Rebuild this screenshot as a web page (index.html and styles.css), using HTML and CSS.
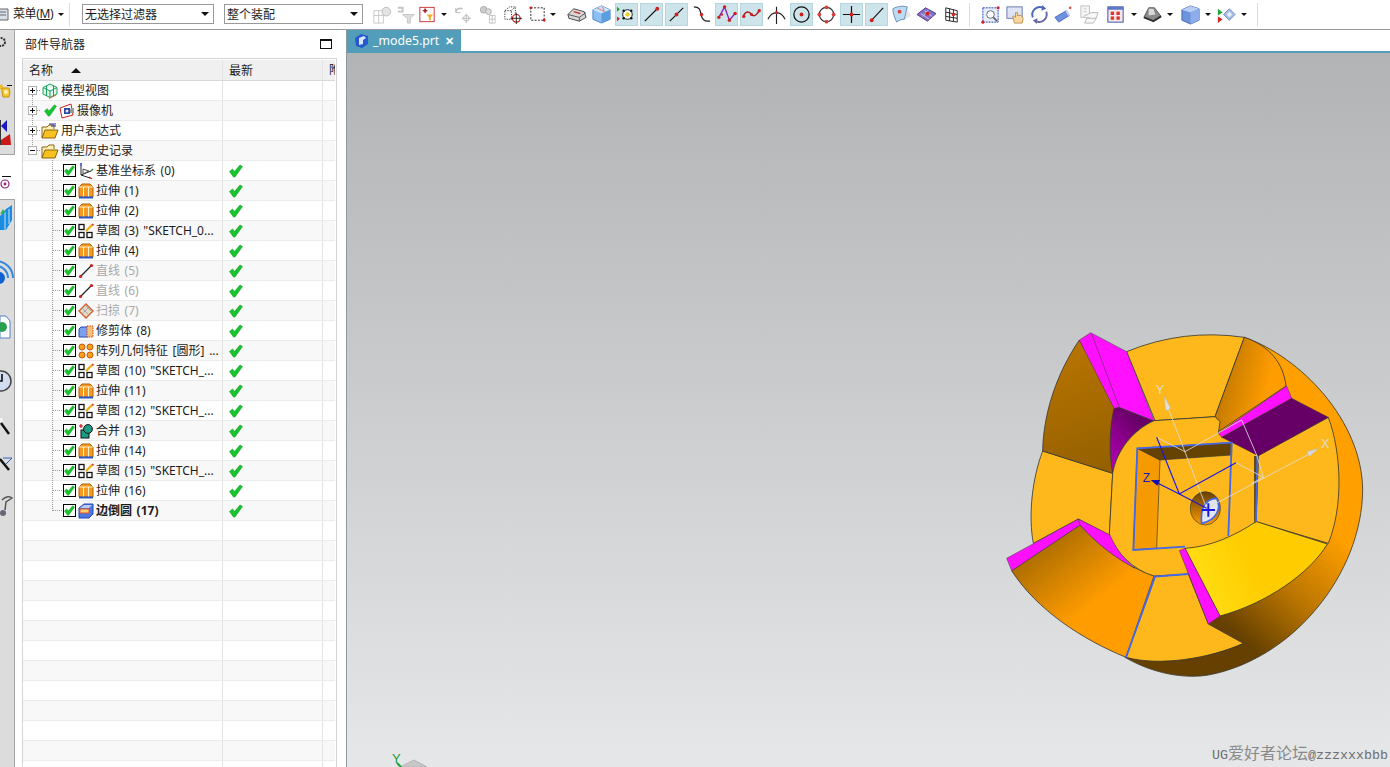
FILE: index.html
```html
<!DOCTYPE html>
<html lang="zh-CN">
<head>
    <meta charset="UTF-8">
    <title>NX - _mode5.prt</title>
    <link rel="stylesheet" href="styles.css">
</head>
<body>
    <svg class="defs">
        <defs>
            <symbol id="chk" viewBox="0 0 14 14"><path d="M0.5 7.5 L3.5 5 L5.5 7.5 L11 1 L13.5 2.5 L6 13 L4.5 13 Z" fill="#12c62c" stroke="#0c8a20" stroke-width="0.5"/></symbol>
            <symbol id="i-ext" viewBox="0 0 16 16"><path d="M1 4 L4 1 H12 L15 4 V14 H1 Z" fill="#f59a20" stroke="#b4600c"/><path d="M5.5 4 V14 M10.5 4 V14 M1 4 H15" stroke="#fff2c8" fill="none"/><path d="M1 14.5 H15" stroke="#2b58c8" stroke-width="2"/></symbol>
            <symbol id="i-sketch" viewBox="0 0 16 16"><g fill="#fff" stroke="#111" stroke-width="1.3"><rect x="1" y="1.5" width="5" height="5"/><rect x="1" y="9.5" width="5" height="5"/><rect x="9" y="9.5" width="5" height="5"/></g><path d="M8 8 L14 2" stroke="#e8b020" stroke-width="2.4"/><path d="M14 1 L15.5 2.5" stroke="#d03030" stroke-width="1.6"/></symbol>
            <symbol id="i-line" viewBox="0 0 16 16"><path d="M2 14 L14 2" stroke="#222" stroke-width="1.2"/><circle cx="2.5" cy="13.5" r="1.6" fill="#d02020"/><circle cx="13.5" cy="2.5" r="1.6" fill="#d02020"/></symbol>
            <symbol id="i-sweep" viewBox="0 0 16 16"><path d="M1 8 L8 1 L15 8 L8 15 Z" fill="#e8d8c8" stroke="#d8602c" stroke-width="1.4"/><path d="M4 5 L11 12 M7 2 L14 9 M11 4 L4 11" stroke="#a8a8a8"/></symbol>
            <symbol id="i-trim" viewBox="0 0 16 16"><path d="M1 6 L3 4 H10 V14 H1 Z" fill="#7ca0ec" stroke="#2448b8"/><rect x="9" y="3" width="6" height="11" fill="#f8c078" stroke="#d04020" stroke-dasharray="1.5 1"/></symbol>
            <symbol id="i-pattern" viewBox="0 0 16 16"><g fill="#f5a020" stroke="#c85a10"><circle cx="4" cy="4" r="3"/><circle cx="12" cy="4" r="3"/><circle cx="4" cy="12" r="3"/><circle cx="12" cy="12" r="3"/></g></symbol>
            <symbol id="i-unite" viewBox="0 0 16 16"><path d="M1 3 H5 M3 1 V5" stroke="#c81818" stroke-width="1.2"/><rect x="3" y="7" width="8" height="8" fill="#1c9c84" stroke="#111"/><circle cx="10" cy="6" r="4.4" fill="#1c9c84" stroke="#111"/></symbol>
            <symbol id="i-blend" viewBox="0 0 16 16"><path d="M1 5 L6 1 H15 V11 L11 15 H1 Z" fill="#4a78e0" stroke="#2448b8"/><path d="M2 6 H11 V10 H2 Z" fill="#f8d070" stroke="#e05030"/><path d="M2 5 L6 2 H14 L11 5 Z" fill="#b8ccf4"/></symbol>
            <symbol id="i-datum" viewBox="0 0 16 16"><path d="M3 3 V12 L13 8 M3 12 L12 15" stroke="#222" fill="none"/><path d="M5 6 L11 8 L5 11 Z" fill="#eee" stroke="#555"/><path d="M3 0 V3" stroke="#1c30c8" stroke-width="1.4"/><path d="M13 8 L15 6" stroke="#1c9c30" stroke-width="1.4"/><path d="M11 14 L14 16" stroke="#c81818" stroke-width="1.4"/></symbol>
            <symbol id="i-folder" viewBox="0 0 18 16"><path d="M1 15 V4 H6 L8 2 H13 V6" fill="#fff0b8" stroke="#8a6410"/><path d="M1 15 L4 7 H17 L14 15 Z" fill="#f8c020" stroke="#8a6410"/></symbol>
        </defs>
    </svg>

    <div class="toolbar">
        <div class="menu-btn">
            <svg class="menu-icon" width="9" height="16" viewBox="0 0 9 16"><path d="M-4 3 H8 V14 H-4 Z" fill="#d8e0e8" stroke="#666"/><path d="M0 6 H6 M0 9 H6" stroke="#667"/></svg>
            <span class="menu-label">菜单(<u>M</u>)</span>
            <span class="tb-arrow-glyph"></span>
        </div>
        <div class="tb-sep first"></div>
        <div class="combo combo-filter"><span>无选择过滤器</span><i></i></div>
        <div class="combo combo-scope"><span>整个装配</span><i></i></div>

        <div class="tb-group">
            <div class="tb-btn"><svg viewBox="0 0 22 22"><path d="M3 7 H13 V20 H3 Z M3 12 H13 M8 7 V20" fill="none" stroke="#c8c8c8"/><circle cx="16" cy="8" r="4.5" fill="#e4e4e4" stroke="#bbb"/></svg></div>
            <div class="tb-btn w22"><svg viewBox="0 0 22 22"><path d="M3 8 H8 V4 L3 4" fill="none" stroke="#c4c4c4" stroke-width="2"/><path d="M8 11 H20 L16 15 V20 H13 V15 Z" fill="#dedede" stroke="#c4c4c4"/></svg></div>
            <div class="tb-btn w22"><svg viewBox="0 0 22 22"><rect x="3" y="3" width="15" height="15" fill="#fff" stroke="#c8323c" transform="translate(0 .5)"/><path d="M6 7 H11 M8.5 4.5 V9.5" stroke="#a01820"/><circle cx="8.5" cy="7" r="1.3" fill="none" stroke="#a01820"/><path d="M10 11 H17 L14.5 14 V17 H12.5 V14 Z" fill="#f0b020"/></svg></div>
            <div class="tb-arrow"><span class="tb-arrow-glyph"></span></div>
            <div class="tb-btn"><svg viewBox="0 0 22 22"><path d="M4 8 A5 5 0 0 1 11 5" fill="none" stroke="#bbb" stroke-width="1.5"/><path d="M4 4 V9 H9" fill="none" stroke="#bbb"/><path d="M10 15 H20 M15 10 V20" stroke="#bbb"/><circle cx="15" cy="15" r="3" fill="none" stroke="#bbb"/></svg></div>
            <div class="tb-btn"><svg viewBox="0 0 22 22"><circle cx="7" cy="6" r="3.5" fill="#ccc" stroke="#aaa"/><circle cx="12" cy="8" r="3" fill="#ddd" stroke="#aaa"/><path d="M13 12 H19 V20 H13 Z M13 16 H19 M16 12 V20" fill="none" stroke="#c4c4c4"/></svg></div>
            <div class="tb-btn"><svg viewBox="0 0 22 22"><path d="M3 7 L8 3 H14 V13 L10 16 H3 Z M3 7 H10 V16 M10 7 L14 3" fill="none" stroke="#333" stroke-dasharray="1.3 1.3"/><circle cx="15" cy="15" r="4" fill="#fff" stroke="#c81818" stroke-width="1.3"/><path d="M9 15 H21 M15 9 V21" stroke="#222"/></svg></div>
            <div class="tb-btn"><svg viewBox="0 0 22 22"><rect x="4" y="4" width="14" height="13" fill="none" stroke="#222" stroke-dasharray="2 1.5"/><circle cx="4" cy="4" r="1.5" fill="#d02020"/><circle cx="18" cy="17" r="1.5" fill="#d02020"/></svg></div>
            <div class="tb-arrow wide"><span class="tb-arrow-glyph"></span></div>
            <div class="tb-btn"><svg viewBox="0 0 22 22"><path d="M2 11 L8 5 L19 8 L21 14 L14 18 L3 15 Z" fill="#d8d8d8" stroke="#444"/><path d="M2 11 L14 14 L21 9 M14 14 V18" fill="none" stroke="#555"/><path d="M8 8 L15 10" stroke="#c83838" stroke-width="1.5"/></svg></div>
            <div class="tb-btn"><svg viewBox="0 0 22 22"><path d="M2 6 L11 2 L20 6 V16 L11 20 L2 16 Z" fill="#8cc0f0" stroke="#4a84c8"/><path d="M2 6 L11 10 L20 6 L11 2 Z" fill="#c8e4fa"/><path d="M11 10 V20 L20 16 V6 Z" fill="#5c9ce0"/><path d="M6 4 L14 8 L12 3" fill="none" stroke="#e87080"/></svg></div>

            <div class="tb-btn hl"><svg viewBox="0 0 22 22"><path d="M1 8 L4 5.5 L1 3 Z" fill="#18a828"/><path d="M1 18 L4 15.5 L1 13 Z" fill="#d02020"/><circle cx="12" cy="11" r="5" fill="#fff" stroke="#111"/><path d="M12 8 L15 11 L12 14 L9 11 Z" fill="#f0d020"/><g fill="#111"><circle cx="8" cy="7" r="1.3"/><circle cx="16" cy="7" r="1.3"/><circle cx="8" cy="15" r="1.3"/><circle cx="16" cy="15" r="1.3"/></g></svg></div>
            <div class="tb-btn hl"><svg viewBox="0 0 22 22"><path d="M4 18 L17 5" stroke="#111" stroke-width="1.2"/><circle cx="17" cy="5" r="2" fill="#d02020"/></svg></div>
            <div class="tb-btn hl"><svg viewBox="0 0 22 22"><path d="M4 18 L18 4" stroke="#111" stroke-width="1.2"/><circle cx="11" cy="11" r="2" fill="#d02020"/></svg></div>
            <div class="tb-btn"><svg viewBox="0 0 22 22"><path d="M3 3 C12 3 9 11 12 15 C14 18 16 18 20 18" fill="none" stroke="#222" stroke-width="1.3"/><circle cx="11" cy="11" r="1.8" fill="#d02020"/></svg></div>
            <div class="tb-btn hl"><svg viewBox="0 0 22 22"><path d="M3 14 L9 3 L14 17 L20 10" fill="none" stroke="#8a20c0" stroke-width="1.4"/><g fill="#d02020"><circle cx="3" cy="14" r="1.8"/><circle cx="9" cy="3" r="1.8"/><circle cx="14" cy="17" r="1.8"/><circle cx="20" cy="10" r="1.8"/><circle cx="6" cy="11" r="1.4"/></g></svg></div>
            <div class="tb-btn hl"><svg viewBox="0 0 22 22"><path d="M2 14 C5 6 9 8 11 11 C14 14 17 11 20 6" fill="none" stroke="#a81818" stroke-width="1.5"/><g fill="#d02020"><circle cx="3" cy="13" r="1.7"/><circle cx="11" cy="11" r="1.7"/><circle cx="19" cy="7" r="1.7"/></g></svg></div>
            <div class="tb-btn"><svg viewBox="0 0 22 22"><path d="M11 3 V21 M2 16 C5 10 8 9 11 9 C14 9 17 10 20 16" fill="none" stroke="#222" stroke-width="1.2"/><circle cx="11" cy="9" r="1.6" fill="#d02020"/></svg></div>
            <div class="tb-btn hl"><svg viewBox="0 0 22 22"><circle cx="11" cy="11" r="8" fill="none" stroke="#111" stroke-width="1.3"/><circle cx="11" cy="11" r="2" fill="#d02020"/></svg></div>
            <div class="tb-btn"><svg viewBox="0 0 22 22"><circle cx="11" cy="11" r="7.5" fill="none" stroke="#222" stroke-width="1.2"/><g fill="#d84040"><circle cx="11" cy="3.5" r="2"/><circle cx="11" cy="18.5" r="2"/><circle cx="3.5" cy="11" r="2"/><circle cx="18.5" cy="11" r="2"/></g></svg></div>
            <div class="tb-btn hl"><svg viewBox="0 0 22 22"><path d="M11 2 V20 M2 11 H20" stroke="#111" stroke-width="1.3"/><circle cx="11" cy="11" r="2" fill="#d02020"/></svg></div>
            <div class="tb-btn hl"><svg viewBox="0 0 22 22"><path d="M5 18 L18 4" stroke="#111" stroke-width="1.2"/><circle cx="6" cy="17" r="2" fill="#d02020"/></svg></div>
            <div class="tb-btn"><svg viewBox="0 0 22 22"><path d="M17 6 L21 12 L14 17 Z" fill="#e8e8e8"/><path d="M2 5 C7 2 13 2 17 3 L14 16 C11 16 8 17 6 19 C4 15 2 10 2 5 Z" fill="#bcdcf4" stroke="#6a8cb8"/><circle cx="9" cy="8" r="2" fill="#d84040"/></svg></div>
            <div class="tb-btn"><svg viewBox="0 0 22 22"><path d="M1 11 L10 4 L21 10 L12 18 Z" fill="#8a70c0" stroke="#4a3a88"/><path d="M5 10 L14 16 M9 7 L17 13 M13 6 L7 13" stroke="#c8c0e8"/><circle cx="12" cy="10" r="2" fill="#d02020"/></svg></div>
            <div class="tb-btn"><svg viewBox="0 0 22 22"><path d="M5 4 L17 7 V19 L5 17 Z M9 5 V18 M13 6 V18.5 M5 8.5 L17 11 M5 13 L17 15" fill="#fff" stroke="#222"/><circle cx="13" cy="11" r="1.8" fill="#d02020"/></svg></div>
        </div>

        <div class="tb-sep mid"></div>

        <div class="tb-group">
            <div class="tb-btn"><svg viewBox="0 0 22 22"><rect x="3" y="4" width="16" height="15" fill="#e8eef8" stroke="#2040b8" stroke-dasharray="2 1"/><circle cx="11" cy="11" r="4" fill="#fff" stroke="#667"/><path d="M14 14 L18 18" stroke="#556" stroke-width="1.6"/><circle cx="19" cy="4" r="1.6" fill="#d02020"/><circle cx="3" cy="19" r="1.6" fill="#d02020"/></svg></div>
            <div class="tb-btn"><svg viewBox="0 0 22 22"><rect x="2" y="3" width="16" height="12" fill="#dde4f4" stroke="#6a78a8"/><path d="M10 20 L8 13 C9 12 10 13 11 14 L11 9 H13 V12 H17 L19 15 L18 20 Z" fill="#f8d8a0" stroke="#c09050"/></svg></div>
            <div class="tb-btn w23"><svg viewBox="0 0 22 22"><path d="M4 14 A8 8 0 0 1 15 4" fill="none" stroke="#4a68b8" stroke-width="2"/><path d="M18 8 A8 8 0 0 1 7 18" fill="none" stroke="#6a6aa8" stroke-width="2"/><path d="M14 1 L18 5 L13 7 Z" fill="#4a68b8"/><path d="M8 21 L4 17 L9 15 Z" fill="#6a6aa8"/></svg></div>
            <div class="tb-btn"><svg viewBox="0 0 22 22"><path d="M2 14 L14 7 L17 12 L6 19 Z" fill="#7090e0" stroke="#5070c8"/><path d="M14 7 L17 12" stroke="#c8d4f8" stroke-width="2"/><circle cx="18" cy="4" r="1.4" fill="#e05050"/></svg></div>
            <div class="tb-btn"><svg viewBox="0 0 22 22"><rect x="3" y="2" width="9" height="12" fill="#f4f4f4" stroke="#c0c0c0"/><path d="M6 5 H9 M6 8 H9" stroke="#ccc"/><path d="M6 13 L14 9 H21 L19 15 H9 L7 20 H16 L19 15" fill="#f8f8f8" stroke="#b8b8b8"/></svg></div>
            <div class="tb-btn m2"><svg viewBox="0 0 22 22"><rect x="3" y="3" width="16" height="16" fill="#f4e8e8" stroke="#3850a8"/><rect x="3" y="3" width="16" height="3" fill="#5c78c8"/><g fill="#e03030"><rect x="6" y="8" width="3.5" height="3.5"/><rect x="12" y="8" width="3.5" height="3.5"/><rect x="6" y="13" width="3.5" height="3.5"/><rect x="12" y="13" width="3.5" height="3.5"/></g></svg></div>
            <div class="tb-arrow"><span class="tb-arrow-glyph"></span></div>
            <div class="tb-btn"><svg viewBox="0 0 22 22"><path d="M2 14 L7 4 L13 4 L20 13 L12 18 Z" fill="#8a8a8a" stroke="#555"/><path d="M7 5 L12 5 L14 11 L7 12 Z" fill="#d8d8d8"/><path d="M2 14 L12 18 L20 13" fill="none" stroke="#333" stroke-width="2"/></svg></div>
            <div class="tb-arrow narrow"><span class="tb-arrow-glyph"></span></div>
            <div class="tb-btn m3"><svg viewBox="0 0 22 22"><path d="M2 6 L11 2 L20 5 V17 L11 21 L2 17 Z" fill="#6c94dc" stroke="#4868b0"/><path d="M2 6 L11 9 L20 5 L11 2 Z" fill="#b8cef4"/><path d="M11 9 V21 L20 17 V5 Z" fill="#8cacea"/></svg></div>
            <div class="tb-arrow narrow"><span class="tb-arrow-glyph"></span></div>
            <div class="tb-btn"><svg viewBox="0 0 22 22"><path d="M9 11 L15 5 L21 11 L15 17 Z" fill="#a8c0e8" stroke="#6a88c0"/><path d="M13 10 L15 8 L18 11 L15 14 L13 12 Z" fill="#e8eef8"/><path d="M3 5 L8 9 L3 12 Z" fill="#20a838"/><path d="M3 13 L8 16 L3 20 Z" fill="#d82020"/></svg></div>
            <div class="tb-arrow"><span class="tb-arrow-glyph"></span></div>
        </div>

        <div class="tb-sep end"></div>
    </div>

    <div class="main">
        <div class="side-strip">
            <div class="strip-top">
                <svg width="15" height="124" viewBox="0 0 15 124"><circle cx="1" cy="12" r="4" fill="none" stroke="#333" stroke-width="2" stroke-dasharray="2 1"/><rect x="7" y="55" width="5" height="1" fill="#111"/><path d="M-3 57 L2 54 L3 57 L0 60 Z" fill="#f0c020"/><path d="M2 58 L9 58 L10 62 L9 67 L3 67 L2 62 Z" fill="#f0c838" stroke="#c89010"/><circle cx="6" cy="62" r="2" fill="#fff4b0"/><path d="M7 90 V102 L1 96 Z" fill="#1818c8"/><path d="M1 110 L10 104 L11 115 H1 Z" fill="#c81818"/><path d="M-1 90 L0 95 L-1 115 H1 V90 Z" fill="#333"/></svg>
            </div>
            <div class="strip-gap">
                <svg width="15" height="44" viewBox="0 0 15 44"><rect x="2" y="21" width="9" height="1" fill="#111"/><circle cx="5" cy="29" r="4" fill="none" stroke="#902080" stroke-width="1.2"/><circle cx="5" cy="29" r="1.4" fill="#902080"/></svg>
            </div>
            <div class="strip-bottom">
                <svg width="15" height="340" viewBox="0 0 15 340"><path d="M0 16 L6 9 L12 5 V20 L6 30 H0 Z" fill="#1c8ce0"/><path d="M5 12 V30 M9 9 V24" stroke="#bfe4fa"/><path d="M0 14 L3 9 L5 13" fill="#30b040"/><path d="M-4 61 A17 17 0 0 1 13 78" fill="none" stroke="#3088e0" stroke-width="2"/><path d="M-4 66 A12 12 0 0 1 8 78" fill="none" stroke="#3088e0" stroke-width="2"/><circle cx="-1" cy="78" r="6" fill="#1060d0"/><path d="M0 116 H6 L10 121 V138 H0 Z" fill="#fff" stroke="#5080c8"/><circle cx="2" cy="127" r="5" fill="#28a050"/><circle cx="1" cy="181" r="10" fill="#d0dcf0" stroke="#444" stroke-width="1.5"/><path d="M-3 181 H2 V174" fill="none" stroke="#111" stroke-width="1.6"/><path d="M1 223 L9 234" stroke="#111" stroke-width="2.4"/><circle cx="1" cy="220" r="2" fill="#f4f4f4"/><path d="M0 259 L9 270" stroke="#111" stroke-width="2.4"/><path d="M3 258 H12 L6 264" fill="none" stroke="#3060c0"/><path d="M2 300 C6 296 10 296 12 298 L6 302 L5 310" fill="none" stroke="#555" stroke-width="1.5"/><circle cx="3" cy="313" r="3" fill="#667"/></svg>
            </div>
        </div>

        <div class="nav-panel">
            <div class="nav-title">
                <span>部件导航器</span>
                <div class="maximize"></div>
            </div>
            <div class="tree">
                <div class="tree-head">
                    <div class="col-name head-cell"><span class="head-name">名称</span><i class="sort-up"></i></div>
                    <div class="col-new head-cell">最新</div>
                    <div class="col-rest head-cell">附</div>
                </div>
                <div class="tree-body">
                    <div class="row">
                        <div class="col-name"><span class="exp plus"></span><span class="dots"></span>
                            <svg class="icon-top" viewBox="0 0 18 16"><path d="M9 1 L16 4.5 V11 L9 14.5 L2 11 V4.5 Z M2 4.500 L9 8 L16 4.5 M9 8 V14.5 M5.5 2.7 V13 M12.5 2.7 V13" fill="#dff5e8" stroke="#18a060"/><path d="M8 15.5 L15 12" stroke="#e06030"/></svg>
                            <span class="label">模型视图</span></div>
                        <div class="col-new"></div><div class="col-rest"></div>
                    </div>
                    <div class="row">
                        <div class="col-name"><span class="exp plus"></span><span class="dots"></span>
                            <svg class="chk-top"><use href="#chk"/></svg>
                            <svg class="icon-cam" viewBox="0 0 16 16"><path d="M1 5 L12 1 L14 12 L3 15 Z" fill="#fff" stroke="#d02020"/><rect x="5" y="5" width="6" height="6" fill="#2848a8"/><circle cx="8" cy="8" r="1.5" fill="#e8e8e8"/><path d="M11 6 L15 5 V10 L11 10" fill="#999"/></svg>
                            <span class="label">摄像机</span></div>
                        <div class="col-new"></div><div class="col-rest"></div>
                    </div>
                    <div class="row">
                        <div class="col-name"><span class="exp plus"></span><span class="dots"></span>
                            <svg class="icon-top" viewBox="0 0 18 16"><use href="#i-folder"/><path d="M8 1 H15 M10 3 H15" stroke="#2828a8"/></svg>
                            <span class="label">用户表达式</span></div>
                        <div class="col-new"></div><div class="col-rest"></div>
                    </div>
                    <div class="row">
                        <div class="col-name"><span class="exp minus"></span><span class="dots"></span>
                            <svg class="icon-top"><use href="#i-folder"/></svg>
                            <span class="label">模型历史记录</span></div>
                        <div class="col-new"></div><div class="col-rest"></div>
                    </div>

                    <div class="row feat">
                        <div class="col-name"><span class="twig"></span><span class="cbox"><svg><use href="#chk"/></svg></span><svg class="feat-icon"><use href="#i-datum"/></svg><span class="label">基准坐标系 (0)</span></div>
                        <div class="col-new"><svg class="ok"><use href="#chk"/></svg></div><div class="col-rest"></div>
                    </div>
                    <div class="row feat">
                        <div class="col-name"><span class="twig"></span><span class="cbox"><svg><use href="#chk"/></svg></span><svg class="feat-icon"><use href="#i-ext"/></svg><span class="label">拉伸 (1)</span></div>
                        <div class="col-new"><svg class="ok"><use href="#chk"/></svg></div><div class="col-rest"></div>
                    </div>
                    <div class="row feat">
                        <div class="col-name"><span class="twig"></span><span class="cbox"><svg><use href="#chk"/></svg></span><svg class="feat-icon"><use href="#i-ext"/></svg><span class="label">拉伸 (2)</span></div>
                        <div class="col-new"><svg class="ok"><use href="#chk"/></svg></div><div class="col-rest"></div>
                    </div>
                    <div class="row feat">
                        <div class="col-name"><span class="twig"></span><span class="cbox"><svg><use href="#chk"/></svg></span><svg class="feat-icon"><use href="#i-sketch"/></svg><span class="label">草图 (3) "SKETCH_0...</span></div>
                        <div class="col-new"><svg class="ok"><use href="#chk"/></svg></div><div class="col-rest"></div>
                    </div>
                    <div class="row feat">
                        <div class="col-name"><span class="twig"></span><span class="cbox"><svg><use href="#chk"/></svg></span><svg class="feat-icon"><use href="#i-ext"/></svg><span class="label">拉伸 (4)</span></div>
                        <div class="col-new"><svg class="ok"><use href="#chk"/></svg></div><div class="col-rest"></div>
                    </div>
                    <div class="row feat">
                        <div class="col-name"><span class="twig"></span><span class="cbox"><svg><use href="#chk"/></svg></span><svg class="feat-icon"><use href="#i-line"/></svg><span class="label dim">直线 (5)</span></div>
                        <div class="col-new"><svg class="ok"><use href="#chk"/></svg></div><div class="col-rest"></div>
                    </div>
                    <div class="row feat">
                        <div class="col-name"><span class="twig"></span><span class="cbox"><svg><use href="#chk"/></svg></span><svg class="feat-icon"><use href="#i-line"/></svg><span class="label dim">直线 (6)</span></div>
                        <div class="col-new"><svg class="ok"><use href="#chk"/></svg></div><div class="col-rest"></div>
                    </div>
                    <div class="row feat">
                        <div class="col-name"><span class="twig"></span><span class="cbox"><svg><use href="#chk"/></svg></span><svg class="feat-icon"><use href="#i-sweep"/></svg><span class="label dim">扫掠 (7)</span></div>
                        <div class="col-new"><svg class="ok"><use href="#chk"/></svg></div><div class="col-rest"></div>
                    </div>
                    <div class="row feat">
                        <div class="col-name"><span class="twig"></span><span class="cbox"><svg><use href="#chk"/></svg></span><svg class="feat-icon"><use href="#i-trim"/></svg><span class="label">修剪体 (8)</span></div>
                        <div class="col-new"><svg class="ok"><use href="#chk"/></svg></div><div class="col-rest"></div>
                    </div>
                    <div class="row feat">
                        <div class="col-name"><span class="twig"></span><span class="cbox"><svg><use href="#chk"/></svg></span><svg class="feat-icon"><use href="#i-pattern"/></svg><span class="label">阵列几何特征 [圆形] ...</span></div>
                        <div class="col-new"><svg class="ok"><use href="#chk"/></svg></div><div class="col-rest"></div>
                    </div>
                    <div class="row feat">
                        <div class="col-name"><span class="twig"></span><span class="cbox"><svg><use href="#chk"/></svg></span><svg class="feat-icon"><use href="#i-sketch"/></svg><span class="label">草图 (10) "SKETCH_...</span></div>
                        <div class="col-new"><svg class="ok"><use href="#chk"/></svg></div><div class="col-rest"></div>
                    </div>
                    <div class="row feat">
                        <div class="col-name"><span class="twig"></span><span class="cbox"><svg><use href="#chk"/></svg></span><svg class="feat-icon"><use href="#i-ext"/></svg><span class="label">拉伸 (11)</span></div>
                        <div class="col-new"><svg class="ok"><use href="#chk"/></svg></div><div class="col-rest"></div>
                    </div>
                    <div class="row feat">
                        <div class="col-name"><span class="twig"></span><span class="cbox"><svg><use href="#chk"/></svg></span><svg class="feat-icon"><use href="#i-sketch"/></svg><span class="label">草图 (12) "SKETCH_...</span></div>
                        <div class="col-new"><svg class="ok"><use href="#chk"/></svg></div><div class="col-rest"></div>
                    </div>
                    <div class="row feat">
                        <div class="col-name"><span class="twig"></span><span class="cbox"><svg><use href="#chk"/></svg></span><svg class="feat-icon"><use href="#i-unite"/></svg><span class="label">合并 (13)</span></div>
                        <div class="col-new"><svg class="ok"><use href="#chk"/></svg></div><div class="col-rest"></div>
                    </div>
                    <div class="row feat">
                        <div class="col-name"><span class="twig"></span><span class="cbox"><svg><use href="#chk"/></svg></span><svg class="feat-icon"><use href="#i-ext"/></svg><span class="label">拉伸 (14)</span></div>
                        <div class="col-new"><svg class="ok"><use href="#chk"/></svg></div><div class="col-rest"></div>
                    </div>
                    <div class="row feat">
                        <div class="col-name"><span class="twig"></span><span class="cbox"><svg><use href="#chk"/></svg></span><svg class="feat-icon"><use href="#i-sketch"/></svg><span class="label">草图 (15) "SKETCH_...</span></div>
                        <div class="col-new"><svg class="ok"><use href="#chk"/></svg></div><div class="col-rest"></div>
                    </div>
                    <div class="row feat">
                        <div class="col-name"><span class="twig"></span><span class="cbox"><svg><use href="#chk"/></svg></span><svg class="feat-icon"><use href="#i-ext"/></svg><span class="label">拉伸 (16)</span></div>
                        <div class="col-new"><svg class="ok"><use href="#chk"/></svg></div><div class="col-rest"></div>
                    </div>
                    <div class="row feat last">
                        <div class="col-name"><span class="twig"></span><span class="cbox"><svg><use href="#chk"/></svg></span><svg class="feat-icon"><use href="#i-blend"/></svg><span class="label strong">边倒圆 (17)</span></div>
                        <div class="col-new"><svg class="ok"><use href="#chk"/></svg></div><div class="col-rest"></div>
                    </div>

                    <div class="row"><div class="col-name"></div><div class="col-new"></div><div class="col-rest"></div></div>
                    <div class="row"><div class="col-name"></div><div class="col-new"></div><div class="col-rest"></div></div>
                    <div class="row"><div class="col-name"></div><div class="col-new"></div><div class="col-rest"></div></div>
                    <div class="row"><div class="col-name"></div><div class="col-new"></div><div class="col-rest"></div></div>
                    <div class="row"><div class="col-name"></div><div class="col-new"></div><div class="col-rest"></div></div>
                    <div class="row"><div class="col-name"></div><div class="col-new"></div><div class="col-rest"></div></div>
                    <div class="row"><div class="col-name"></div><div class="col-new"></div><div class="col-rest"></div></div>
                    <div class="row"><div class="col-name"></div><div class="col-new"></div><div class="col-rest"></div></div>
                    <div class="row"><div class="col-name"></div><div class="col-new"></div><div class="col-rest"></div></div>
                    <div class="row"><div class="col-name"></div><div class="col-new"></div><div class="col-rest"></div></div>
                    <div class="row"><div class="col-name"></div><div class="col-new"></div><div class="col-rest"></div></div>
                    <div class="row"><div class="col-name"></div><div class="col-new"></div><div class="col-rest"></div></div>
                    <div class="row"><div class="col-name"></div><div class="col-new"></div><div class="col-rest"></div></div>
                </div>
            </div>
        </div>

        <div class="work-area">
            <div class="tab-bar">
                <div class="tab">
                    <svg width="16" height="16" viewBox="0 0 16 16"><path d="M1 5 L7 1 L14 3 V11 L8 15 L2 13 Z" fill="#2858d0"/><path d="M5 5 L10 3 L12 5 L9 7 V11 L5 12 Z" fill="#d8e8fc"/></svg>
                    <span class="tab-name">_mode5.prt</span>
                    <span class="tab-close">✕</span>
                </div>
            </div>
            <div class="viewport">
                <svg class="model" viewBox="0 0 1110 1080">
                    <defs>
                        <linearGradient id="rim" x1="0.9" y1="0.2" x2="0.4" y2="1"><stop offset="0.35" stop-color="#ff9f00"/><stop offset="0.62" stop-color="#b87400"/><stop offset="0.85" stop-color="#654000"/></linearGradient>
                        <linearGradient id="recess" x1="0" y1="0.3" x2="1" y2="0.6"><stop offset="0.1" stop-color="#c07800"/><stop offset="0.75" stop-color="#ff9c00"/></linearGradient>
                        <linearGradient id="lowleft" x1="0.15" y1="0.05" x2="0.75" y2="0.75"><stop offset="0" stop-color="#9c6400"/><stop offset="0.75" stop-color="#ff9c00"/></linearGradient>
                        <linearGradient id="upleft" x1="0.5" y1="0" x2="0.7" y2="1"><stop offset="0" stop-color="#b87400"/><stop offset="1" stop-color="#946000"/></linearGradient>
                        <linearGradient id="fillet" x1="0.8" y1="0" x2="0.1" y2="1"><stop offset="0.2" stop-color="#660066"/><stop offset="1" stop-color="#b800b8"/></linearGradient>
                        <linearGradient id="bright" x1="0" y1="0.6" x2="0.7" y2="0.4"><stop offset="0" stop-color="#ffe014"/><stop offset="0.7" stop-color="#ffcc00"/></linearGradient>
                        <linearGradient id="hole" x1="0" y1="0" x2="0" y2="1"><stop offset="0" stop-color="#654000"/><stop offset="1" stop-color="#ff9c00"/></linearGradient>
                    </defs>
                    <g stroke="#3a3a30" stroke-width="2.5" stroke-linejoin="round">
                        <path d="M733 52 C900 110 1086 300 1088 510 C1086 760 880 1020 620 1066 C530 1078 440 1050 375 1012 Z" fill="url(#rim)"/>
                        <path d="M380 95 Q550 25 733 52 L645 290 L465 302 Z" fill="#ffb81c"/>
                        <path d="M733 52 C810 78 850 130 858 198 L655 335 L658 305 L645 290 Z" fill="url(#recess)"/>
                        <path d="M985 292 C1025 400 1030 560 985 670 L768 605 L775 407 Z" fill="#ffb81c"/>
                        <path d="M555 685 L770 605 L982 672 C930 760 800 850 660 888 Z" fill="url(#bright)"/>
                        <path d="M465 770 L565 762 L625 912 L730 970 C630 1015 480 1040 378 1012 Z" fill="#ffb81c"/>
                        <path d="M35 752 L240 615 C300 680 370 735 462 768 L378 1012 C250 960 110 870 35 752 Z" fill="url(#lowleft)"/>
                        <path d="M128 393 L338 460 L328 645 L235 597 L100 670 C85 590 95 480 128 393 Z" fill="#ffb81c"/>
                        <path d="M238 60 C170 160 130 280 128 393 L338 460 L358 262 Z" fill="url(#upleft)"/>
                        <path d="M462 302 C400 330 350 390 338 460 C325 390 330 320 342 265 L358 262 Z" fill="url(#fillet)"/>
                        <path d="M462 302 L645 290 L660 305 L655 340 L775 407 L768 605 C700 650 630 680 555 685 L565 762 L462 768 C400 750 350 700 328 645 L338 460 C350 390 400 330 462 302 Z" fill="#ffb81c"/>
                    </g>
                    <g stroke="#3a3a30" stroke-width="1.5">
                        <path d="M238 60 L272 38 L380 95 L462 302 L358 262 L342 265 Z" fill="#ff10ff"/>
                        <path d="M275 42 L358 262" fill="none"/>
                        <path d="M655 340 L860 198 L875 235 L665 352 Z" fill="#ff10ff"/>
                        <path d="M665 352 L875 235 L985 292 L775 407 Z" fill="#660066"/>
                        <path d="M538 692 L555 685 L660 888 L625 912 Z" fill="#ff10ff"/>
                        <path d="M20 715 L235 597 L240 615 L35 752 Z" fill="#ff10ff"/>
                        <path d="M235 597 L330 645 C350 690 370 715 405 745 C340 710 290 670 240 615 Z" fill="#ff10ff"/>
                    </g>
                    <path d="M412 385 L480 420 L470 685 L400 690 Z" fill="#f59a00" stroke="#3a3a30" stroke-width="2"/>
                    <path d="M412 385 L695 368 L695 405 L480 420 Z" fill="#664200" stroke="#3a3a30" stroke-width="2"/>
                    <path d="M762 408 H775 L768 605 H762 Z" fill="#6a4800"/>
                    <g fill="none" stroke="#4468e8" stroke-width="5.5">
                        <path d="M685 648 L695 368 L412 385 L400 690 L555 680"/>
                        <path d="M378 1012 L465 770 L565 762"/>
                        <path d="M772 407 L768 605"/>
                    </g>
                    <ellipse cx="616" cy="565" rx="45" ry="50" fill="url(#hole)" stroke="#3a3a30" stroke-width="2"/>
                    <path d="M605 610 C600 570 615 535 650 535 C665 565 650 600 605 610 Z" fill="#e2e6f0" stroke="#4468e8" stroke-width="5"/>
                    <g fill="none" stroke="#dcdcd8" stroke-width="2.5">
                        <path d="M620 565 L495 240 M620 565 L950 390"/>
                        <path d="M470 352 L555 395 L725 300 L770 405 L790 472 L708 428"/>
                        <path d="M790 472 L755 490"/>
                    </g>
                    <g fill="none" stroke="#1818e0" stroke-width="3.5">
                        <path d="M470 352 L538 522 L708 428 M538 522 L620 565 M538 522 L465 485"/>
                        <path d="M625 550 V590 M605 570 H645" stroke-width="6"/>
                    </g>
                    <path d="M493 228 L512 265 L497 272 Z" fill="#e0e0e0" stroke="#a8a8a8"/>
                    <path d="M955 385 L920 395 L928 410 Z" fill="#d8d8d8" stroke="#a8a8a8"/>
                    <path d="M452 480 L480 480 L472 497 Z" fill="#1010b0"/>
                    <text class="axis axis-light" x="468" y="222">Y</text>
                    <text class="axis axis-light" x="964" y="384">X</text>
                    <text class="axis axis-blue" x="428" y="486">Z</text>
                </svg>
                <svg class="triad" viewBox="0 0 50 20">
                    <path d="M11 20 L25 13 L38 20 Z" fill="#c8c8c8" stroke="#b4b4b4"/>
                    <path d="M8 16 L12 20" stroke="#18a038" stroke-width="2"/>
                    <text x="3" y="16" class="triad-y">Y</text>
                </svg>
                <div class="watermark">UG<span class="wm-cjk">爱好者论坛</span>@zzzxxxbbb</div>
            </div>
        </div>
    </div>
</body>
</html>
```

FILE: styles.css
```css
html, body {
    margin: 0;
    padding: 0;
    height: 100%;
    overflow: hidden;
}

body {
    display: flex;
    flex-direction: column;
    background-color: #fff;
    color: #1c1c1c;
    font-family: "Noto Sans", "Noto Sans CJK SC", sans-serif;
    font-size: 12px;
}

.defs {
    display: none;
}

/* top toolbar */
.toolbar {
    display: flex;
    align-items: center;
    flex: none;
    height: 28px;
    padding-bottom: 1px;
    background-color: #fff;
    border-bottom: 1px solid #979b9b;
}

.menu-btn {
    display: flex;
    align-items: center;
    width: 69px;
    flex: none;
}

.menu-icon {
    flex: none;
}

.menu-label {
    margin-left: 4px;
    margin-right: 5px;
    margin-bottom: 2px;
    letter-spacing: -0.4px;
    white-space: nowrap;
}

.tb-arrow-glyph {
    display: block;
    width: 0;
    height: 0;
    border-left: 3px solid transparent;
    border-right: 3px solid transparent;
    border-top: 3px solid #111;
}

.tb-sep {
    flex: none;
    width: 1px;
    height: 23px;
    background-color: #dcdcdc;
}

.tb-sep.first {
    margin-right: 12px;
}

.tb-sep.mid {
    margin-left: 5px;
    margin-right: 8px;
}

.tb-sep.end {
    margin-left: 7px;
}

.combo {
    display: flex;
    align-items: center;
    justify-content: space-between;
    box-sizing: border-box;
    flex: none;
    height: 20px;
    padding: 0 4px 1px 2px;
    border: 1px solid #999;
    background-color: #fff;
}

.combo i {
    width: 0;
    height: 0;
    border-left: 4px solid transparent;
    border-right: 4px solid transparent;
    border-top: 4px solid #111;
}

.combo-filter {
    width: 132px;
    margin-right: 10px;
}

.combo-scope {
    width: 139px;
    margin-right: 6px;
}

.tb-group {
    display: flex;
    align-items: center;
    flex: none;
}

.tb-btn {
    display: flex;
    align-items: center;
    justify-content: center;
    flex: none;
    width: 25px;
    height: 23px;
}

.tb-btn svg {
    width: 21px;
    height: 21px;
}

.tb-btn.w22 {
    width: 22px;
}

.tb-btn.w23 {
    width: 23px;
}

.tb-btn.m2 {
    margin-left: 2px;
}

.tb-btn.m3 {
    margin-left: 3px;
}

.tb-btn.hl {
    position: relative;
}

.tb-btn.hl::before {
    content: "";
    position: absolute;
    inset: 0 1px;
    background-color: #cde4ea;
    border: 1px solid #b5d6e0;
    box-sizing: border-box;
}

.tb-btn.hl svg {
    position: relative;
}

.tb-arrow {
    display: flex;
    align-items: center;
    justify-content: center;
    flex: none;
    width: 12px;
}

.tb-arrow.wide {
    width: 14px;
    justify-content: flex-start;
}

.tb-arrow.narrow {
    width: 10px;
}

/* main area */
.main {
    display: flex;
    flex: 1;
    min-height: 0;
}

.side-strip {
    display: flex;
    flex-direction: column;
    flex: none;
    width: 15px;
    border-right: 1px solid transparent;
}

.strip-top,
.strip-bottom {
    background-color: #dcdcdc;
    box-sizing: border-box;
    border-right: 1px solid #a4a4a4;
    overflow: hidden;
}

.strip-top {
    height: 125px;
    border-bottom: 1px solid #a4a4a4;
}

.strip-gap {
    height: 44px;
    flex: none;
}

.strip-bottom {
    flex: 1;
    border-top: 1px solid #a4a4a4;
}

.side-strip svg {
    display: block;
}

.nav-panel {
    display: flex;
    flex-direction: column;
    flex: none;
    width: 330px;
    padding-left: 6px;
    box-sizing: border-box;
    background-color: #fff;
    min-height: 0;
}

.nav-title {
    display: flex;
    align-items: center;
    justify-content: space-between;
    flex: none;
    height: 28px;
    padding: 0 14px 0 3px;
}

.maximize {
    width: 12px;
    height: 10px;
    box-sizing: border-box;
    border: 1px solid #111;
    border-top-width: 2px;
}

.tree {
    flex: 1;
    min-height: 0;
    width: 315px;
    box-sizing: border-box;
    border: 1px solid #d4d4d4;
    border-bottom: none;
    padding: 1px 1px 0 0;
    overflow: hidden;
}

.tree-head {
    display: flex;
    height: 21px;
    box-sizing: border-box;
    background-color: #f0f0f0;
    border-bottom: 1px solid #d8d8d8;
}

.head-cell {
    display: flex;
    align-items: center;
    padding-left: 6px;
    overflow: hidden;
    white-space: nowrap;
}

.head-name {
    margin-right: 18px;
}

.sort-up {
    width: 0;
    height: 0;
    border-left: 5px solid transparent;
    border-right: 5px solid transparent;
    border-bottom: 5px solid #111;
}

.col-name {
    display: flex;
    align-items: center;
    flex: none;
    box-sizing: border-box;
    width: 200px;
    height: 100%;
    border-right: 1px solid #e4e4e4;
    position: relative;
}

.col-new {
    display: flex;
    align-items: center;
    flex: none;
    box-sizing: border-box;
    width: 100px;
    height: 100%;
    padding-left: 6px;
    border-right: 1px solid #e4e4e4;
}

.col-rest {
    flex: 1;
    min-width: 0;
    height: 100%;
}

.head-cell.col-rest {
    display: block;
    line-height: 20px;
}

.row {
    display: flex;
    height: 20px;
    box-sizing: border-box;
    background-color: #fff;
    border-bottom: 1px solid #ececec;
}

.row:nth-child(even) {
    background-color: #f8f8f8;
}

.exp {
    position: relative;
    flex: none;
    box-sizing: border-box;
    width: 9px;
    height: 9px;
    margin-left: 5px;
    border: 1px solid #b0b0b0;
    background:
        linear-gradient(#111, #111) center / 5px 1px no-repeat,
        #fff;
}

.exp.plus {
    background:
        linear-gradient(#111, #111) center / 5px 1px no-repeat,
        linear-gradient(#111, #111) center / 1px 5px no-repeat,
        #fff;
}

.exp.plus::after {
    content: "";
    position: absolute;
    left: 3px;
    top: 8px;
    height: 12px;
    border-left: 1px dotted #999;
}

.dots {
    flex: none;
    width: 3px;
    border-top: 1px dotted #999;
    margin-right: 1px;
}

.icon-top {
    flex: none;
    width: 18px;
    height: 16px;
    margin-right: 2px;
}

.chk-top {
    flex: none;
    width: 13px;
    height: 13px;
    margin-left: 3px;
    margin-right: 2px;
}

.icon-cam {
    flex: none;
    width: 16px;
    height: 16px;
    margin-right: 2px;
}

.label {
    margin-bottom: 2px;
    word-spacing: 1.5px;
    white-space: nowrap;
}

.label.dim {
    color: #a8a8a8;
}

.label.strong {
    font-weight: 700;
}

.twig {
    position: relative;
    flex: none;
    width: 40px;
    height: 100%;
}

.twig::before {
    content: "";
    position: absolute;
    left: 29px;
    top: -1px;
    bottom: -1px;
    border-left: 1px dotted #999;
}

.row.last .twig::before {
    bottom: 9px;
}

.twig::after {
    content: "";
    position: absolute;
    left: 30px;
    width: 9px;
    top: 9px;
    border-top: 1px dotted #999;
}

.cbox {
    display: flex;
    align-items: center;
    justify-content: center;
    flex: none;
    box-sizing: border-box;
    width: 13px;
    height: 13px;
    border: 1px solid #000;
    background-color: #fff;
    margin-right: 2px;
}

.cbox svg {
    width: 11px;
    height: 11px;
}

.feat-icon {
    flex: none;
    width: 16px;
    height: 16px;
    margin-right: 2px;
}

.ok {
    width: 14px;
    height: 14px;
}

/* graphics window */
.work-area {
    display: flex;
    flex-direction: column;
    flex: 1;
    min-width: 0;
    border-left: 1px solid #8e9a9a;
}

.tab-bar {
    flex: none;
    height: 23px;
    box-sizing: border-box;
    border-bottom: 2px solid #519dba;
    background-color: #fff;
}

.tab {
    display: flex;
    align-items: center;
    width: 114px;
    height: 21px;
    padding-left: 7px;
    box-sizing: border-box;
    background-color: #519dba;
    color: #fff;
}

.tab-name {
    font-size: 12.3px;
    margin-left: 3px;
    white-space: nowrap;
}

.tab-close {
    font-size: 11px;
    font-weight: 700;
    margin-left: 6px;
}

.viewport {
    position: relative;
    flex: 1;
    overflow: hidden;
    background: linear-gradient(#b2b3b5, #e6e7e9);
}

.model {
    position: absolute;
    left: 653px;
    top: 267px;
    width: 370px;
    height: 360px;
}

.axis {
    font-family: "Liberation Sans", sans-serif;
    font-size: 36px;
}

.axis-light {
    fill: #dcdcd8;
}

.axis-blue {
    fill: #1818c8;
}

.triad {
    position: absolute;
    left: 42px;
    bottom: 0;
    width: 50px;
    height: 20px;
}

.triad-y {
    font-family: "Liberation Sans", sans-serif;
    font-size: 13px;
    fill: #18a038;
}

.watermark {
    position: absolute;
    right: 2px;
    bottom: 2px;
    color: #6e6e6e;
    font-family: "Liberation Mono", "Noto Sans CJK SC", monospace;
    font-size: 13.33px;
    line-height: 18px;
    white-space: nowrap;
}

.wm-cjk {
    font-size: 16px;
    color: #8a8a8a;
}
```
